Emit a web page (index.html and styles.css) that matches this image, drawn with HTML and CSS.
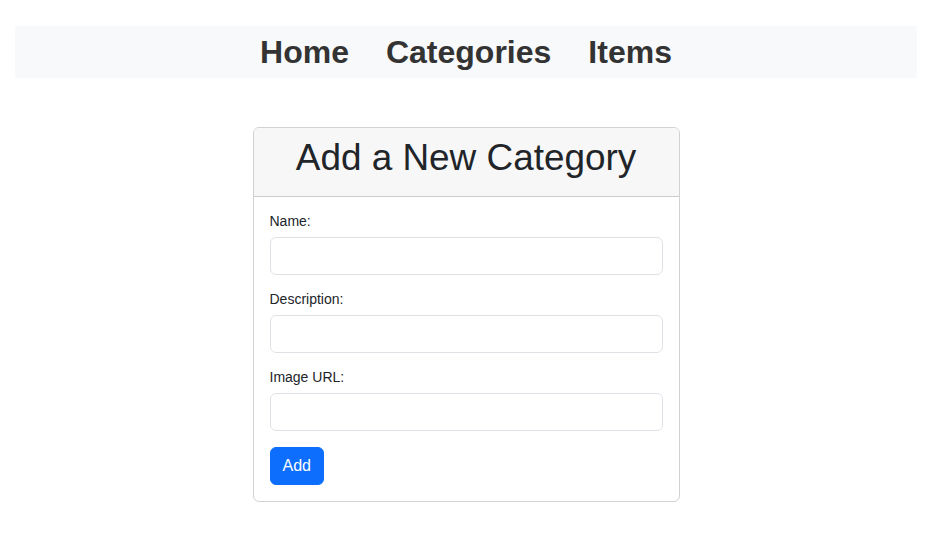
FILE: index.html
```html
<!DOCTYPE html>
<html lang="en">
<head>
<meta charset="utf-8">
<title>Add a New Category</title>
<link rel="stylesheet" href="styles.css">
</head>
<body>
<div class="page">
  <nav class="topnav">
    <a href="#" class="nav-link">Home</a>
    <a href="#" class="nav-link">Categories</a>
    <a href="#" class="nav-link">Items</a>
  </nav>
  <div class="card">
    <div class="card-header">
      <h1 class="card-title">Add a New Category</h1>
    </div>
    <form class="card-body">
      <div class="group">
        <label class="label" for="name">Name:</label>
        <input class="input" id="name" type="text">
      </div>
      <div class="group">
        <label class="label" for="desc">Description:</label>
        <input class="input" id="desc" type="text">
      </div>
      <div class="group">
        <label class="label" for="img">Image URL:</label>
        <input class="input" id="img" type="text">
      </div>
      <button class="btn" type="button">Add</button>
    </form>
  </div>
</div>
</body>
</html>
```

FILE: styles.css
```css
* { box-sizing: border-box; }
html, body { margin: 0; padding: 0; background: #fff; }
body {
  font-family: "Liberation Sans", Arial, sans-serif;
  color: #212529;
  font-size: 16px;
  line-height: 1.5;
}
.page {
  width: 932px;
  padding-top: 26px;
}
.topnav {
  margin: 0 15px;
  background: #f8f9fa;
  display: flex;
  justify-content: center;
  gap: 37px;
  padding: 8px 0;
}
.nav-link {
  font-size: 32px;
  font-weight: bold;
  line-height: 36px;
  color: #333;
  text-decoration: none;
}
.card {
  width: 427px;
  margin: 49px auto 0;
  border: 1px solid rgba(0,0,0,0.175);
  border-radius: 6px;
  overflow: hidden;
}
.card-header {
  background: #f7f7f7;
  border-bottom: 1px solid rgba(0,0,0,0.175);
  padding: 8px 16px;
  text-align: center;
}
.card-title {
  margin: 0 0 8px;
  font-size: 36.9px;
  font-weight: 400;
  line-height: 1.2;
  color: #212529;
}
.card-body {
  padding: 16px;
  margin: 0;
}
.group { margin-bottom: 16px; }
.label {
  display: block;
  font-size: 14px;
  line-height: 17px;
  margin-bottom: 7px;
}
.input {
  display: block;
  width: 100%;
  height: 38px;
  border: 1px solid #dee2e6;
  border-radius: 6px;
  padding: 6px 12px;
  font: inherit;
  background: #fff;
}
.btn {
  display: block;
  height: 38px;
  padding: 6px 12px;
  background: #0d6efd;
  border: 1px solid #0d6efd;
  color: #fff;
  border-radius: 6px;
  font-family: inherit;
  font-size: 16px;
  line-height: 24px;
}
```
